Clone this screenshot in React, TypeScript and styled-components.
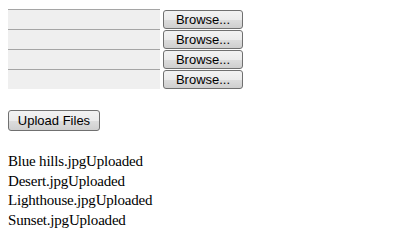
import React from "react";
import styled, { createGlobalStyle } from "styled-components";

const GlobalStyle = createGlobalStyle`
  body {
    margin: 8px;
    background: #ffffff;
    font-family: "Liberation Serif", "Times New Roman", serif;
    font-size: 16px;
    color: #000000;
  }
`;

const FileList = styled.div`
  display: flex;
  flex-direction: column;
  padding-top: 1px;
`;

const FileRow = styled.div`
  display: flex;
  align-items: center;
  gap: 3px;
  height: 20px;
`;

const PathBox = styled.div`
  box-sizing: border-box;
  width: 152px;
  height: 20px;
  background: #efefef;
  border-top: 1px solid #a5a5a5;
`;

const NativeButton = styled.button<{ $width: number; $height: number }>`
  box-sizing: border-box;
  width: ${(p) => p.$width}px;
  height: ${(p) => p.$height}px;
  padding: 0;
  border: 1px solid #707070;
  border-radius: 3px;
  background: linear-gradient(to bottom, #f2f2f2 0%, #ebebeb 50%, #dddddd 51%, #cfcfcf 100%);
  font-family: "Liberation Sans", Arial, sans-serif;
  font-size: 13px;
  color: #000000;
  line-height: 1;
`;

const UploadArea = styled.div`
  margin-top: 21px;
  height: 21px;
`;

const Results = styled.div`
  margin-top: 21px;
  font-size: 15px;
  letter-spacing: -0.2px;
  line-height: 19.5px;
`;

const files = ["Blue hills.jpg", "Desert.jpg", "Lighthouse.jpg", "Sunset.jpg"];

export default function App() {
  return (
    <>
      <GlobalStyle />
      <FileList>
        {files.map((f) => (
          <FileRow key={f}>
            <PathBox />
            <NativeButton $width={80} $height={19}>
              Browse...
            </NativeButton>
          </FileRow>
        ))}
      </FileList>
      <UploadArea>
        <NativeButton $width={92} $height={21}>
          Upload Files
        </NativeButton>
      </UploadArea>
      <Results>
        {files.map((f) => (
          <div key={f}>{f}Uploaded</div>
        ))}
      </Results>
    </>
  );
}
